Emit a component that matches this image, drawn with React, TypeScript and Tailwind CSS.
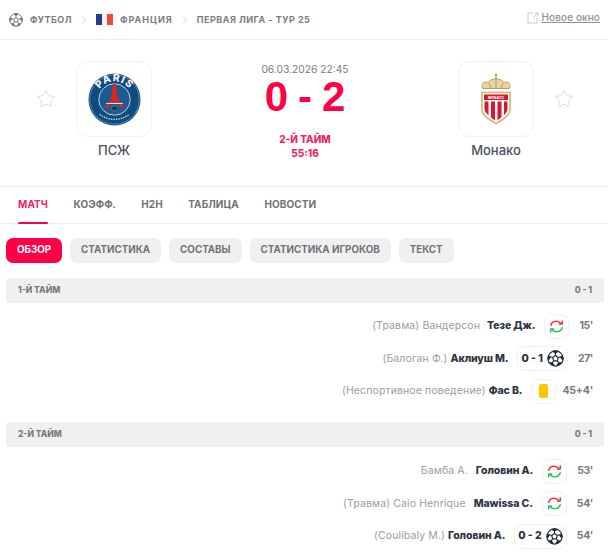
import React from "react";
import { ChevronRight, Star } from "lucide-react";

function Ball({ size, color }: { size: number; color: string }) {
  return (
    <svg width={size} height={size} viewBox="0 0 16 16" fill="none" stroke={color} strokeWidth="1.100" strokeLinejoin="round">
      <circle cx="8" cy="8" r="7.200" />
      <path d="M8 5.200l2.700 1.900-1 3.100H6.300l-1-3.100z" />
      <path d="M8 5.200V2.800M10.700 7.100l2.300-.8M9.700 10.200l1.500 2M6.300 10.200l-1.500 2M5.300 7.100L3 6.300" />
      <path d="M5.800 1.500L8 2.800l2.200-1.300-2.200-.8zM13 6.300l1.700-.6.200 3-1.300-.6zM11.200 12.200l1.500-.3-1.500 2-1.800.4zM4.800 12.200l-1.500-.3 1.500 2 1.800.4zM3 6.300l-1.700-.6-.2 3 1.300-.6z" fill={color} />
    </svg>
  );
}

function Flag() {
  return (
    <div className="flex w-[17px] h-[11px]">
      <div className="flex-1 bg-[#2b3a8f]" />
      <div className="flex-1 bg-[#f4f4f6]" />
      <div className="flex-1 bg-[#ee4a3a]" />
    </div>
  );
}

function PsgLogo() {
  return (
    <svg width="53" height="53" viewBox="0 0 54 54">
      <circle cx="27" cy="27" r="26.500" fill="#0f4a80" />
      <circle cx="27" cy="27" r="25.200" fill="none" stroke="#a9bfd3" strokeWidth="0.500" />
      <circle cx="27" cy="27" r="16" fill="#1d5a92" stroke="#c6d6e4" strokeWidth="1" />
      <path id="psgarc" d="M8.500 27a18.500 18.500 0 0 1 37 0" fill="none" />
      <text fontFamily="Inter, sans-serif" fontSize="10.500" fontWeight="800" fill="#f2f5f8" letterSpacing="1">
        <textPath href="#psgarc" startOffset="50%" textAnchor="middle">PARIS</textPath>
      </text>
      <path d="M25.500 11h3l1.200 12c.6 4.800 3.600 8.800 8.300 11.800h-5c-1.400-3.600-3.400-5.300-6-5.300s-4.600 1.700-6 5.300h-5c4.700-3 7.700-7 8.300-11.800z" fill="#e2231a" />
      <path d="M18.500 31h17" stroke="#fff" strokeWidth="0.900" />
      <ellipse cx="27" cy="36" rx="3.600" ry="2.600" fill="#0b3a66" stroke="#b3a36a" strokeWidth="0.500" />
      <path d="M12 42c8 7 22 7 30 0" fill="none" stroke="#c7d6e3" strokeWidth="1.400" strokeDasharray="1.500 1" />
    </svg>
  );
}

function MonacoLogo() {
  return (
    <svg width="32" height="52" viewBox="0 0 32 52">
      <path d="M2.800 15.500C.5 11.500 4 7.500 8 9.500c1.500-2.500 4.500-3.500 8-3.500s6.500 1 8 3.500c4-2 7.500 2 5.200 6z" fill="#e7d5a8" stroke="#bf9a55" strokeWidth="1" />
      <path d="M8 9.500c1.500 2 2.500 3.700 3 6M24 9.500c-1.500 2-2.500 3.700-3 6M16 6v9.500" stroke="#bf9a55" strokeWidth="1" fill="none" />
      <circle cx="16" cy="2" r="1.300" fill="#bf9a55" />
      <rect x="15.400" y="2" width="1.200" height="4" fill="#bf9a55" />
      <path d="M1 18.500h30v18c0 6-8 11.500-15 15C9 48 1 42.500 1 36.500z" fill="#d7bb83" />
      <path d="M2.800 20.300h26.400v16c0 5-7 10-13.200 13.200C9.800 46.300 2.800 41.300 2.800 36.300z" fill="#fff" />
      <path d="M4 21.500h24v5.500H4z" fill="#d8172f" />
      <text x="16" y="25.800" textAnchor="middle" fontFamily="Inter, sans-serif" fontSize="3.400" fontWeight="700" fill="#fff">MONACO</text>
      <path d="M4.500 28.500h4v13.700c-1.500-1.400-4-3.500-4-6.200zM11 28.500h4v18.800c-1.300-.7-2.800-1.700-4-2.800zM17.500 28.500h4V44c-1.200 1.200-2.700 2.300-4 3.200zM24 28.500h3.500V36c0 2.400-1.700 4.500-3.500 6.200z" fill="#d8172f" />
    </svg>
  );
}

function SubIcon() {
  return (
    <svg width="15" height="15" viewBox="0 0 15 15" fill="none" strokeWidth="1.500" strokeLinecap="round" strokeLinejoin="round">
      <path d="M1.800 6.200C2.500 3.700 4.700 2.300 7.300 2.300c1.900 0 3.600.9 4.800 2.300" stroke="#e8394a" />
      <path d="M13.300 1.900v3.100h-3" stroke="#e8394a" />
      <path d="M13.200 8.800c-.7 2.500-2.900 3.900-5.500 3.900-1.900 0-3.600-.9-4.800-2.300" stroke="#2fc05c" />
      <path d="M1.700 13.100V10h3" stroke="#2fc05c" />
    </svg>
  );
}

function Badge({ children }: { children: React.ReactNode }) {
  return (
    <div className="h-[25px] min-w-[25px] rounded-lg border border-[#f1f1f3] bg-white flex items-center justify-center shrink-0">
      {children}
    </div>
  );
}

function Goal({ score }: { score: string }) {
  return (
    <Badge>
      <div className="flex items-center gap-[4px] px-[3px] text-[10.500px] font-extrabold text-[#2a3140]">
        {score}
        <Ball size={17} color="#232a36" />
      </div>
    </Badge>
  );
}

type Ev = { sub: string; name: string; gap: string; icon: React.ReactNode; min: string; minCls?: string };

function Row({ ev }: { ev: Ev }) {
  return (
    <div className="flex items-center justify-end h-[32.500px] pr-[11px] text-[10.500px] leading-none">
      <span className="text-[#9a9ca3] tracking-[0.12px]">{ev.sub}</span>
      <span className={`${ev.gap} font-extrabold text-[#2c3442] tracking-[-0.1px]`}>{ev.name}</span>
      <div className="ml-[9px]">{ev.icon}</div>
      <span className={`${ev.minCls ?? "ml-[10px] tracking-[-0.4px]"} font-bold text-[#777a82] text-[10.500px]`}>{ev.min}</span>
    </div>
  );
}

function Period({ title, score }: { title: string; score: string }) {
  return (
    <div className="flex items-center justify-between h-[25px] rounded-[4px] bg-[#f0f0f0] px-[12px] text-[8.500px] font-extrabold text-[#777a80]">
      <span>{title}</span>
      <span>{score}</span>
    </div>
  );
}

const first: Ev[] = [
  { sub: "(Травма) Вандерсон", name: "Тезе Дж.", gap: "ml-[7px]", icon: <Badge><SubIcon /></Badge>, min: "15'" },
  { sub: "(Балоган Ф.)", name: "Аклиуш М.", gap: "ml-[3px]", icon: <Goal score="0 - 1" />, min: "27'" },
  { sub: "(Неспортивное поведение)", name: "Фас В.", gap: "ml-[3px]", icon: <Badge><div className="w-[9px] h-[14px] rounded-[2px] bg-[#fdc700]" /></Badge>, min: "45+4'", minCls: "ml-[6px] tracking-[-0.2px]" },
];

const second: Ev[] = [
  { sub: "Бамба А.", name: "Головин А.", gap: "ml-[8px]", icon: <Badge><SubIcon /></Badge>, min: "53'" },
  { sub: "(Травма) Caio Henrique", name: "Mawissa C.", gap: "ml-[8px]", icon: <Badge><SubIcon /></Badge>, min: "54'" },
  { sub: "(Coulibaly M.)", name: "Головин А.", gap: "ml-[3px]", icon: <Goal score="0 - 2" />, min: "54'" },
];

function Team({ name, logo }: { name: string; logo: React.ReactNode }) {
  return (
    <div className="flex flex-col items-center w-[76px]">
      <div className="w-[76px] h-[76px] rounded-[12px] border border-[#f1f1f3] flex items-center justify-center">
        {logo}
      </div>
      <div className="mt-[4px] text-[13px] leading-[18px] font-medium text-[#4a5160]">{name}</div>
    </div>
  );
}

const FavStar = () => <Star className="w-[20px] h-[20px] text-[#dcdcdf]" strokeWidth={1.200} />;

export default function App() {
  return (
    <div className="w-[608px] h-[558px] overflow-hidden bg-white" style={{ fontFamily: "Inter, 'Noto Sans', sans-serif" }}>
      {/* Breadcrumbs */}
      <div className="flex items-center h-[40px] border-b border-[#eeeeee] pl-[9px] pr-[8px] text-[9px] font-bold text-[#7b7d84] tracking-[0.5px]">
        <Ball size={14} color="#6c6e75" />
        <span className="ml-[7px]">ФУТБОЛ</span>
        <ChevronRight className="w-[12px] h-[12px] mx-[6px] text-[#d0d0d3]" />
        <Flag />
        <span className="ml-[7px] tracking-[1px]">ФРАНЦИЯ</span>
        <ChevronRight className="w-[12px] h-[12px] mx-[6px] text-[#d0d0d3]" />
        <span>ПЕРВАЯ ЛИГА - ТУР 25</span>
        <div className="ml-auto flex items-center gap-[3px] font-medium text-[10px] tracking-[0.1px] text-[#8f9197] mt-[-4px]">
          <svg width="12" height="12" viewBox="0 0 12 12" fill="none" stroke="#c9c9cc" strokeWidth="1">
            <path d="M6 1H1v10h9V6M7.500 1H11v3.500M11 1 6.500 5.500" />
          </svg>
          <span className="underline">Новое окно</span>
        </div>
      </div>

      {/* Match header */}
      <div className="flex justify-center items-start h-[147px] border-b border-[#eeeeee] pt-[21px] pl-[2px]">
        <div className="mt-[28px] mr-[20px]"><FavStar /></div>
        <Team name="ПСЖ" logo={<PsgLogo />} />
        <div className="w-[306px] flex flex-col items-center">
          <div className="mt-[1px] text-[10.250px] leading-[14px] text-[#777a80]">06.03.2026 22:45</div>
          <div
            className="text-[42px] leading-[30px] mt-[6px] pl-[10px] font-bold text-[#ff0046] tracking-[10px]"
            style={{ fontFamily: "'Liberation Sans', sans-serif" }}
          >
            0-2
          </div>
          <div className="mt-[20px] text-[10px] leading-[14px] font-extrabold text-[#f0275c]">2-Й ТАЙМ</div>
          <div className="text-[10px] leading-[14px] font-extrabold text-[#f0275c]">55:16</div>
        </div>
        <Team name="Монако" logo={<MonacoLogo />} />
        <div className="mt-[28px] ml-[20px]"><FavStar /></div>
      </div>

      {/* Tabs */}
      <div className="flex items-stretch h-[37px] border-b border-[#eeeeee] pl-[18px] gap-[25.500px] text-[10px] tracking-[0.1px] font-bold text-[#6f7278]">
        <div className="relative flex items-center text-[#f0275c] pb-[2px]">
          МАТЧ
          <div className="absolute left-0 right-0 bottom-[-1px] h-[2px] rounded-full bg-[#ff0046]" />
        </div>
        {["КОЭФФ.", "H2H", "ТАБЛИЦА", "НОВОСТИ"].map((t) => (
          <div key={t} className="flex items-center pb-[2px]">{t}</div>
        ))}
      </div>

      {/* Sub tabs */}
      <div className="flex gap-[8px] pl-[6px] mt-[14px] text-[9.800px] font-bold">
        <div className="h-[25px] px-[11px] flex items-center rounded-[7px] bg-[#ff0046] text-white">ОБЗОР</div>
        {["СТАТИСТИКА", "СОСТАВЫ", "СТАТИСТИКА ИГРОКОВ", "ТЕКСТ"].map((t) => (
          <div key={t} className="h-[25px] px-[11px] flex items-center rounded-[7px] bg-[#f0f0f0] text-[#70737a]">{t}</div>
        ))}
      </div>

      {/* Events */}
      <div className="pl-[6px] pr-[4px] mt-[15px]">
        <Period title="1-Й ТАЙМ" score="0 - 1" />
        <div className="mt-[7px]">
          {first.map((ev) => <Row key={ev.name} ev={ev} />)}
        </div>
        <div className="mt-[14px]">
          <Period title="2-Й ТАЙМ" score="0 - 1" />
        </div>
        <div className="mt-[8.500px]">
          {second.map((ev) => <Row key={ev.sub} ev={ev} />)}
        </div>
      </div>
    </div>
  );
}
